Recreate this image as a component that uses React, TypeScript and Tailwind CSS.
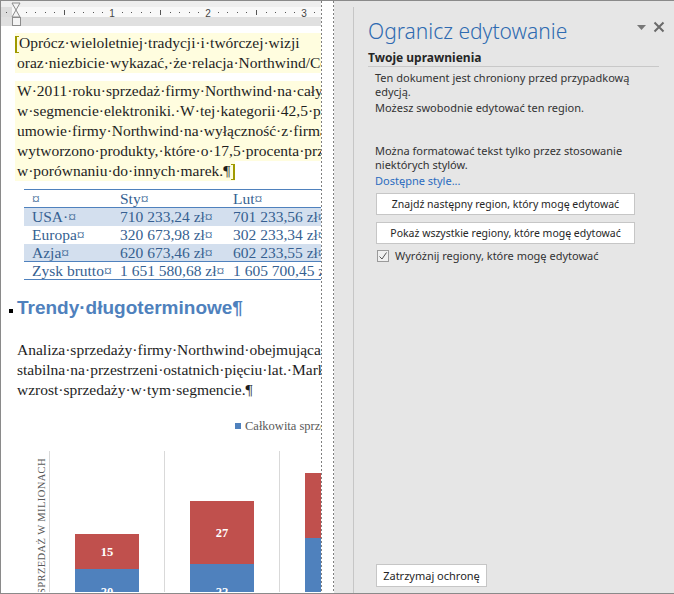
import React from "react";

const dash =
  "w-[1px] shrink-0 bg-[repeating-linear-gradient(to_bottom,#7f7f7f_0px,#7f7f7f_2px,transparent_2px,transparent_4px)]";

function Ruler() {
  const marks: React.ReactNode[] = [];
  for (let k = -1; k <= 32; k++) {
    const x = Math.round(15 + k * 9.6);
    if (k === 0) continue;
    if (k % 10 === 0) {
      marks.push(
        <text key={k} x={x} y={15.5} textAnchor="middle" fontSize="10" fill="#444" fontFamily="Liberation Sans, sans-serif">
          {k / 10}
        </text>
      );
    } else if (k % 5 === 0) {
      marks.push(<rect key={k} x={x} y={9} width={1} height={5} fill="#555" />);
    } else {
      marks.push(<rect key={k} x={x} y={11} width={1} height={1} fill="#555" />);
    }
  }
  return (
    <svg width="320" height="25" className="block shrink-0">
      <rect x="0" y="0" width="320" height="6" fill="#eeeeee" />
      <rect x="0" y="6" width="320" height="10" fill="#dcdcdc" />
      <rect x="11" y="6" width="309" height="10" fill="#f8f8f8" />
      <rect x="0" y="16" width="320" height="9" fill="#e0e0e0" />
      {marks}
      <polygon points="11,2 19,2 15,9" fill="#f4f4f4" stroke="#8c8c8c" strokeWidth="1" />
      <polygon points="15,9 11,16 19,16" fill="#f4f4f4" stroke="#8c8c8c" strokeWidth="1" />
      <rect x="11.5" y="16.5" width="8" height="8" fill="#f4f4f4" stroke="#8c8c8c" strokeWidth="1" />
    </svg>
  );
}

function Chart() {
  return (
    <svg width="320" height="176" className="block shrink-0 mt-[16px]">
      <rect x="234" y="7" width="6" height="6" fill="#4f81bd" />
      <text x="244" y="14" fontSize="12.5" fill="#595959" fontFamily="Liberation Serif, serif">
        Całkowita sprzedaż
      </text>
      <line x1="48.5" y1="35" x2="48.5" y2="176" stroke="#d9d9d9" />
      <line x1="163.5" y1="35" x2="163.5" y2="176" stroke="#d9d9d9" />
      <line x1="278.5" y1="35" x2="278.5" y2="176" stroke="#d9d9d9" />
      <text
        x="44"
        y="42"
        transform="rotate(-90 44 42)"
        textAnchor="end"
        fontSize="10.5"
        letterSpacing="0.4"
        fill="#595959"
        fontFamily="Liberation Serif, serif"
      >
        SPRZEDAŻ W MILIONACH
      </text>
      <rect x="74" y="118" width="64" height="35" fill="#c0504d" />
      <rect x="74" y="153" width="64" height="30" fill="#4f81bd" />
      <rect x="189" y="85" width="64" height="63" fill="#c0504d" />
      <rect x="189" y="148" width="64" height="35" fill="#4f81bd" />
      <rect x="304" y="57" width="64" height="65" fill="#c0504d" />
      <rect x="304" y="122" width="64" height="60" fill="#4f81bd" />
      <g fontSize="12.5" fontWeight="bold" fill="#ffffff" textAnchor="middle" fontFamily="Liberation Serif, serif">
        <text x="106" y="139.5">15</text>
        <text x="106" y="180">20</text>
        <text x="221" y="120.5">27</text>
        <text x="221" y="180">22</text>
      </g>
    </svg>
  );
}

function Doc() {
  return (
    <div className="w-[320px] h-full shrink-0 overflow-hidden flex flex-col bg-white font-['Liberation_Serif',serif] text-[15.5px] text-[#1e1e1e]">
      <Ruler />
      <div className="pt-[7px] flex flex-col">
        <div className="ml-[14px] whitespace-nowrap leading-[20px]">
          <div className="bg-[#fffddf] h-[20px]">
            <span className="inline-block w-[4px] h-[17px] border-l-2 border-y border-[#a09a00] align-middle" />
            Oprócz·wieloletniej·tradycji·i·twórczej·wizji
          </div>
          <div className="bg-[#fffddf] h-[20px] pl-[2px]">oraz·niezbicie·wykazać,·że·relacja·Northwind/Contoso</div>
        </div>
        <div className="mt-[8px] ml-[14px] whitespace-nowrap leading-[20px]">
          <div className="bg-[#fffddf] h-[20px] pl-[2px]">W·2011·roku·sprzedaż·firmy·Northwind·na·całym·rynku</div>
          <div className="bg-[#fffddf] h-[20px] pl-[2px]">w·segmencie·elektroniki.·W·tej·kategorii·42,5·procent</div>
          <div className="bg-[#fffddf] h-[20px] pl-[2px]">umowie·firmy·Northwind·na·wyłączność·z·firmą·Contoso</div>
          <div className="bg-[#fffddf] h-[20px] pl-[2px]">wytworzono·produkty,·które·o·17,5·procenta·przewyższały</div>
          <div className="h-[20px]">
            <span className="inline-block bg-[#fffddf] h-[20px] pl-[2px]">
              w·porównaniu·do·innych·marek.¶
              <span className="inline-block w-[4px] h-[16px] border-r-2 border-y border-[#a09a00] align-middle ml-[1px]" />
            </span>
          </div>
        </div>
        <div className="mt-[8px] ml-[23px] border-y border-[#4f81bd] text-[#365f91] whitespace-nowrap">
          <div className="flex h-[17px] leading-[17px] border-b border-[#4f81bd] box-content">
            <div className="w-[91px] shrink-0 pl-[8px]">¤</div>
            <div className="w-[113px] shrink-0 pl-[5px]">Sty¤</div>
            <div className="w-[160px] shrink-0 pl-[5px]">Lut¤</div>
          </div>
          <div className="flex h-[18px] leading-[18px] bg-[#d3dfee]">
            <div className="w-[91px] shrink-0 pl-[8px]">USA·¤</div>
            <div className="w-[113px] shrink-0 pl-[5px]">710 233,24 zł¤</div>
            <div className="w-[160px] shrink-0 pl-[5px]">701 233,56 zł¤</div>
          </div>
          <div className="flex h-[18px] leading-[18px]">
            <div className="w-[91px] shrink-0 pl-[8px]">Europa¤</div>
            <div className="w-[113px] shrink-0 pl-[5px]">320 673,98 zł¤</div>
            <div className="w-[160px] shrink-0 pl-[5px]">302 233,34 zł¤</div>
          </div>
          <div className="flex h-[17px] leading-[17px] bg-[#d3dfee]">
            <div className="w-[91px] shrink-0 pl-[8px]">Azja¤</div>
            <div className="w-[113px] shrink-0 pl-[5px]">620 673,46 zł¤</div>
            <div className="w-[160px] shrink-0 pl-[5px]">602 233,55 zł¤</div>
          </div>
          <div className="flex h-[17px] leading-[17px] border-t border-[#4f81bd] box-content">
            <div className="w-[91px] shrink-0 pl-[8px]">Zysk brutto¤</div>
            <div className="w-[113px] shrink-0 pl-[5px]">1 651 580,68 zł¤</div>
            <div className="w-[160px] shrink-0 pl-[5px]">1 605 700,45 zł¤</div>
          </div>
        </div>
        <div className="mt-[16px] h-[24px] flex whitespace-nowrap font-['Liberation_Sans',sans-serif] font-bold text-[19px] leading-[24px] text-[#4f81bd]">
          <span className="self-start mt-[13px] ml-[8px] w-[4px] h-[4px] bg-black shrink-0" />
          <span className="ml-[4px]">Trendy·długoterminowe¶</span>
        </div>
        <div className="mt-[20px] ml-[16px] whitespace-nowrap leading-[20px]">
          <div>Analiza·sprzedaży·firmy·Northwind·obejmująca·kategorię</div>
          <div>stabilna·na·przestrzeni·ostatnich·pięciu·lat.·Marketing</div>
          <div>wzrost·sprzedaży·w·tym·segmencie.¶</div>
        </div>
        <Chart />
      </div>
    </div>
  );
}

function Panel() {
  return (
    <div className="flex-1 flex flex-col pl-[14px] pr-[15px] pt-[16px] pb-[6px] font-['Noto_Sans',sans-serif] text-[#333] whitespace-nowrap">
      <div className="flex items-center justify-between h-[28px]">
        <div className="text-[21px] font-light leading-[28px] text-[#2f6bb1]">Ogranicz edytowanie</div>
        <div className="flex items-center gap-[7px] mt-[-8px] mr-[-6px]">
          <svg width="9" height="5">
            <polygon points="0,0 9,0 4.5,5" fill="#777" />
          </svg>
          <svg width="12" height="12">
            <path d="M1.5 1.5 L10.5 10.5 M10.5 1.5 L1.5 10.5" stroke="#6a6a6a" strokeWidth="2" />
          </svg>
        </div>
      </div>
      <div className="mt-[5px] text-[12px] font-bold leading-[16px] text-[#262626] border-b border-[#c8c8c8]">
        Twoje uprawnienia
      </div>
      <div className="pl-[7px] flex flex-col flex-1 text-[11px] leading-[14px]">
        <div className="mt-[4px]">Ten dokument jest chroniony przed przypadkową</div>
        <div>edycją.</div>
        <div className="mt-[2px]">Możesz swobodnie edytować ten region.</div>
        <div className="mt-[29px]">Można formatować tekst tylko przez stosowanie</div>
        <div>niektórych stylów.</div>
        <div className="mt-[2px] text-[#2b6cc0]">Dostępne style...</div>
        <div className="mt-[5px] ml-[1px] w-[259px] h-[22px] flex items-center justify-center bg-white border border-[#c6c6c6] text-[10.5px] text-[#262626]">
          Znajdź następny region, który mogę edytować
        </div>
        <div className="mt-[7px] ml-[1px] w-[259px] h-[22px] flex items-center justify-center bg-white border border-[#c6c6c6] text-[10.5px] text-[#262626]">
          Pokaż wszystkie regiony, które mogę edytować
        </div>
        <div className="mt-[5px] ml-[2px] h-[14px] flex items-center gap-[6px]">
          <div className="w-[12px] h-[12px] border border-[#9a9a9a] bg-[#f0f0f0] flex items-center justify-center">
            <svg width="10" height="10">
              <path d="M1.5 5.5 L4 8 L8.5 1.5" stroke="#555" strokeWidth="1" fill="none" />
            </svg>
          </div>
          <span>Wyróżnij regiony, które mogę edytować</span>
        </div>
        <div className="flex-1" />
        <div className="ml-[1px] w-[111px] h-[23px] flex items-center justify-center bg-white border border-[#c6c6c6] text-[#262626]">
          Zatrzymaj ochronę
        </div>
      </div>
    </div>
  );
}

export default function App() {
  return (
    <div className="w-[674px] h-[594px] flex border-l border-y border-[#8a8a8a] bg-white overflow-hidden">
      <Doc />
      <div className={dash} />
      <div className="w-[11px] shrink-0 bg-white" />
      <div className={dash} />
      <div className="flex-1 flex bg-[#e6e6e6]">
        <div className="w-[19px] shrink-0" />
        <div className="w-[1px] shrink-0 mt-[6px] bg-[#c6c6c6]" />
        <Panel />
      </div>
    </div>
  );
}
